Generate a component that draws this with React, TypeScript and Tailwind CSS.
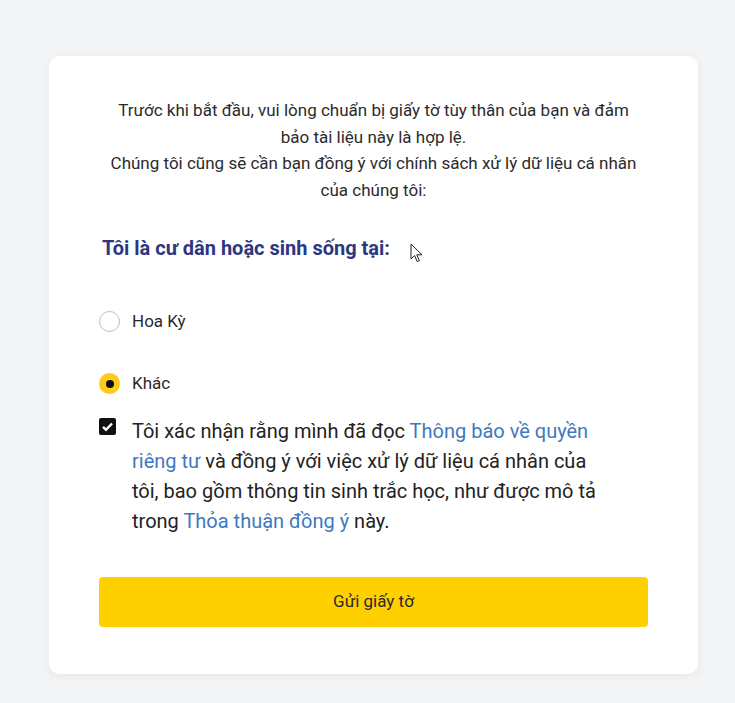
import React, { useState } from 'react'

const font = { fontFamily: 'Roboto, "Noto Sans", sans-serif' }

function Radio({ checked, label, onClick }: { checked: boolean; label: string; onClick: () => void }) {
  return (
    <button type="button" onClick={onClick} className="flex items-center gap-[12px] text-[17px] leading-[25px] text-[#2a2a2a]">
      {checked ? (
        <span className="flex h-[21px] w-[21px] items-center justify-center rounded-full bg-[#fecb1c]">
          <span className="h-[8px] w-[8px] rounded-full bg-[#111]" />
        </span>
      ) : (
        <span className="h-[21px] w-[21px] rounded-full border border-[#bdbdbd] bg-white" />
      )}
      <span>{label}</span>
    </button>
  )
}

export default function App() {
  const [choice, setChoice] = useState('other')
  const [agree, setAgree] = useState(true)

  return (
    <div className="min-h-[703px] w-full bg-[#f3f4f6] pl-[49px] pt-[56px] pb-[30px]" style={font}>
      <div className="relative w-[649px] rounded-[10px] bg-white px-[50px] pt-[41px] pb-[47px] shadow-[0_2px_10px_rgba(0,0,0,0.06)]">
        <p className="mx-auto w-[530px] text-center text-[17px] leading-[26.5px] text-[#2b2b2b]">
          Trước khi bắt đầu, vui lòng chuẩn bị giấy tờ tùy thân của bạn và đảm bảo tài liệu này là hợp lệ.
          <br />
          Chúng tôi cũng sẽ cần bạn đồng ý với chính sách xử lý dữ liệu cá nhân của chúng tôi:
        </p>

        <h2 className="mt-[32px] pl-[3px] text-[20px] font-bold leading-[26px] text-[#2c3782]">
          Tôi là cư dân hoặc sinh sống tại:
        </h2>

        <div className="mt-[48px] flex flex-col items-start gap-[37px]">
          <Radio checked={choice === 'us'} label="Hoa Kỳ" onClick={() => setChoice('us')} />
          <Radio checked={choice === 'other'} label="Khác" onClick={() => setChoice('other')} />
        </div>

        <div className="mt-[20px] flex gap-[16px] text-[20px] leading-[30px] text-[#232323]">
          <span
            onClick={() => setAgree(!agree)}
            className="mt-[2px] flex h-[17px] w-[17px] shrink-0 items-center justify-center rounded-[2px] bg-[#111]"
          >
            {agree && (
              <svg width="13" height="13" viewBox="0 0 13 13" fill="none">
                <path d="M2 6.8l3 3 6-6.3" stroke="white" strokeWidth="2.4" />
              </svg>
            )}
          </span>
          <p className="w-[475px]">
            Tôi xác nhận rằng mình đã đọc <span className="text-[#3f78c0]">Thông báo về quyền riêng tư</span> và đồng ý
            với việc xử lý dữ liệu cá nhân của tôi, bao gồm thông tin sinh trắc học, như được mô tả trong{' '}
            <span className="text-[#3f78c0]">Thỏa thuận đồng ý</span> này.
          </p>
        </div>

        <button
          type="button"
          className="mt-[41px] h-[50px] w-full rounded-[4px] bg-[#ffd000] text-[17px] text-[#2a2a2a]"
        >
          Gửi giấy tờ
        </button>

        <svg className="absolute left-[361px] top-[187px]" width="13" height="20" viewBox="0 0 13 20">
          <path d="M1 1v15l3.6-3.4 2.6 6 2.2-1-2.6-5.8H12z" fill="white" stroke="#222" strokeWidth="1" strokeLinejoin="round" />
        </svg>
      </div>
    </div>
  )
}
